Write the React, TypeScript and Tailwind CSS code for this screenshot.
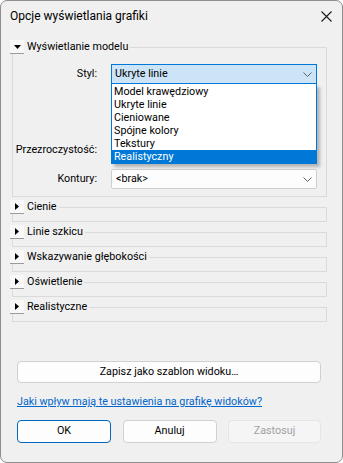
import React from "react";

const font = { fontFamily: 'Roboto, "Noto Sans", sans-serif' };

function Chevron() {
  return (
    <svg width="9" height="5" viewBox="0 0 9 5" className="text-[#606060]">
      <path d="M0.5 0.5 L4.5 4.5 L8.5 0.5" fill="none" stroke="currentColor" strokeWidth="1" />
    </svg>
  );
}

function ToggleButton({ open }: { open: boolean }) {
  return (
    <div className="w-[14px] h-[14px] shrink-0 bg-[#f8f8f8] border-b border-[#9a9a9a] flex items-center justify-center">
      {open ? (
        <svg width="7" height="4" viewBox="0 0 7 4">
          <path d="M0 0 H7 L3.5 4 Z" fill="#000" />
        </svg>
      ) : (
        <svg width="4" height="7" viewBox="0 0 4 7">
          <path d="M0 0 V7 L4 3.5 Z" fill="#000" />
        </svg>
      )}
    </div>
  );
}

function GroupHeader({ label, open }: { label: string; open: boolean }) {
  return (
    <div className="flex h-[14px]">
      <ToggleButton open={open} />
      <span className="pl-[3px] pr-[2px] leading-[14px] whitespace-nowrap">{label}</span>
      <div className="flex-1 mt-[7px] border-t border-r border-[#dadada]" />
    </div>
  );
}

function CollapsedGroup({ label }: { label: string }) {
  return (
    <div className="mt-[3px]">
      <GroupHeader label={label} open={false} />
      <div className="ml-[2px] h-[8px] border-l border-r border-b border-[#dadada]" />
    </div>
  );
}

const styles = ["Model krawędziowy", "Ukryte linie", "Cieniowane", "Spójne kolory", "Tekstury", "Realistyczny"];

export default function App() {
  return (
    <div className="w-[343px] h-[463px] bg-white" style={font}>
      <div className="w-[343px] h-[463px] bg-[#f0f0f0] border border-[#8e8e8e] rounded-[7px] flex flex-col text-[10.75px] text-black">
        {/* title bar */}
        <div className="h-[30px] flex items-center justify-between pl-[9px] pr-[10px]">
          <span className="text-[12px] leading-none">Opcje wyświetlania grafiki</span>
          <svg width="11" height="11" viewBox="0 0 11 11">
            <path d="M0.5 0.5 L10.5 10.5 M10.5 0.5 L0.5 10.5" stroke="#1a1a1a" strokeWidth="1.1" />
          </svg>
        </div>

        <div className="pl-[9px] pr-[15px] mt-[9px]">
          {/* model display group */}
          <div>
            <GroupHeader label="Wyświetlanie modelu" open={true} />
            <div className="ml-[2px] border-l border-r border-b border-[#dadada] pt-[10px] pb-[7px] pr-[9px]">
              <div className="relative">
                <div className="flex items-center h-[20px]">
                  <span className="w-[84px] text-right">Styl:</span>
                  <div className="ml-[14px] flex-1 h-[20px] bg-[#cce4f7] border border-[#0078d7] flex items-center justify-between pl-[3px] pr-[4px]">
                    <span>Ukryte linie</span>
                    <Chevron />
                  </div>
                </div>

                <div className="flex items-center h-[20px] mt-[56px]">
                  <span className="w-[84px] text-right">Przezroczystość:</span>
                </div>

                <div className="flex items-center h-[20px] mt-[9px]">
                  <span className="w-[84px] text-right">Kontury:</span>
                  <div className="ml-[14px] flex-1 h-[20px] bg-[#fdfdfd] border border-[#cfcfcf] rounded-[2px] flex items-center justify-between pl-[4px] pr-[4px]">
                    <span>&lt;brak&gt;</span>
                    <Chevron />
                  </div>
                </div>

                {/* open dropdown list */}
                <div className="absolute left-[98px] top-[20px] right-0 bg-white border border-[#0078d7] border-t-0 pt-[1px] shadow-[3px_3px_3px_rgba(0,0,0,0.25)]">
                  {styles.map((s) => (
                    <div
                      key={s}
                      className={
                        s === "Realistyczny"
                          ? "h-[13px] leading-[13px] pl-[2px] bg-[#0078d7] text-white"
                          : "h-[13px] leading-[13px] pl-[2px] text-black"
                      }
                    >
                      {s}
                    </div>
                  ))}
                </div>
              </div>
            </div>
          </div>

          <CollapsedGroup label="Cienie" />
          <CollapsedGroup label="Linie szkicu" />
          <CollapsedGroup label="Wskazywanie głębokości" />
          <CollapsedGroup label="Oświetlenie" />
          <CollapsedGroup label="Realistyczne" />
        </div>

        <div className="pl-[16px] pr-[21px] mt-[39px]">
          <button className="w-full h-[22px] bg-[#fdfdfd] border border-[#d0d0d0] rounded-[4px]">
            Zapisz jako szablon widoku…
          </button>
          <div className="mt-[12px] leading-[14px]">
            <a className="text-[#0066cc] underline">Jaki wpływ mają te ustawienia na grafikę widoków?</a>
          </div>
          <div className="mt-[11px] flex justify-between">
            <button className="w-[94px] h-[23px] bg-[#fdfdfd] border border-[#0067c0] rounded-[4px]">OK</button>
            <button className="w-[94px] h-[23px] bg-[#fdfdfd] border border-[#d0d0d0] rounded-[4px]">Anuluj</button>
            <button className="w-[93px] h-[23px] bg-[#f5f5f5] border border-[#e5e5e5] rounded-[4px] text-[#a0a0a0]">Zastosuj</button>
          </div>
        </div>
      </div>
    </div>
  );
}
